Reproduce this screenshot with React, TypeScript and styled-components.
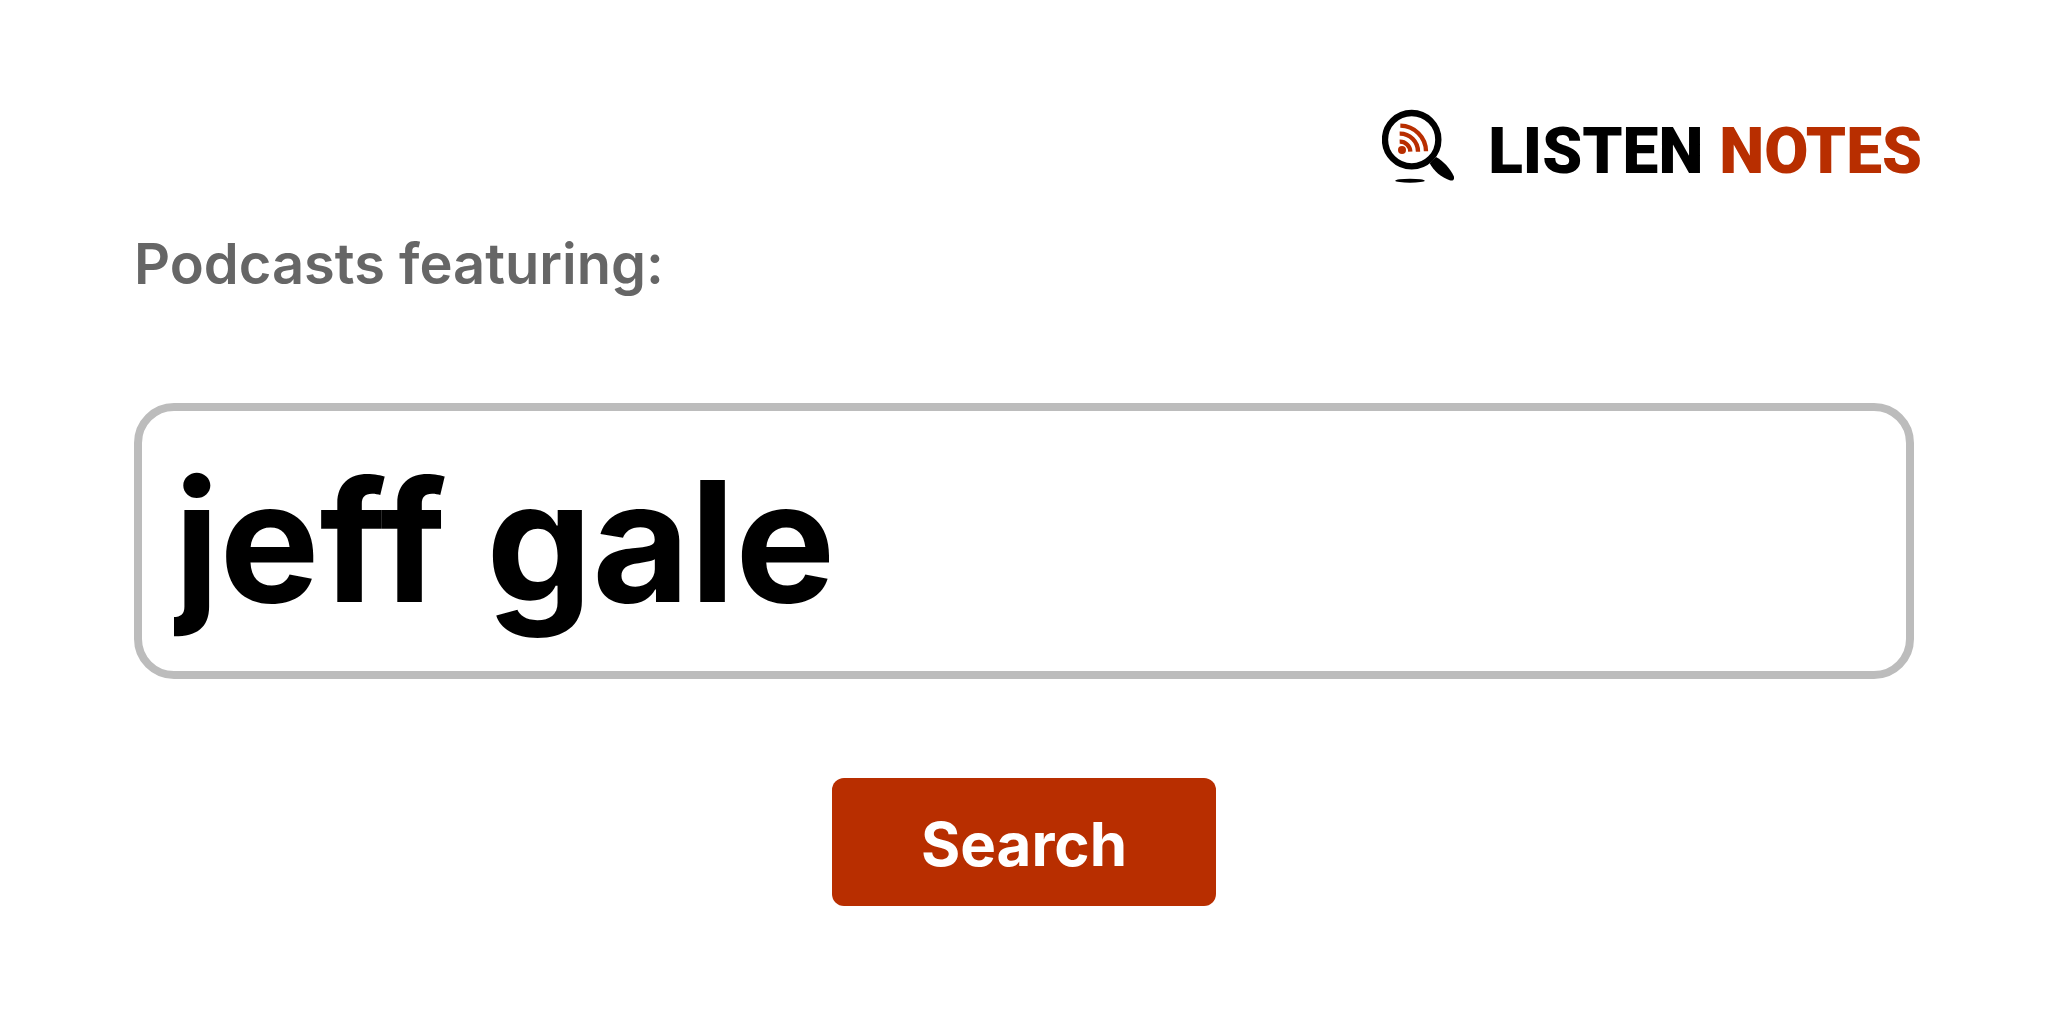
import React, { useState } from "react";
import styled, { createGlobalStyle } from "styled-components";

const brand = "#b82e00";

const GlobalStyle = createGlobalStyle`
  *, *::before, *::after { box-sizing: border-box; }
  body {
    margin: 0;
    background: #fff;
    color: #000;
    font-family: Inter, "Liberation Sans", sans-serif;
  }
`;

const Page = styled.main`
  padding: 106px 126px 112px 134px;
`;

const Header = styled.header`
  display: flex;
  justify-content: flex-end;
`;

const Brand = styled.a`
  display: flex;
  align-items: flex-start;
  gap: 34px;
  color: inherit;
  text-decoration: none;
`;

const BrandMark = styled.svg`
  width: 72px;
  height: 80px;
`;

const BrandName = styled.span`
  padding-top: 6px;
  font-family: Roboto, "Liberation Sans", sans-serif;
  font-size: 64px;
  font-weight: 900;
  line-height: 80px;
  white-space: nowrap;
`;

const BrandAccent = styled.span`
  color: ${brand};
`;

const SearchForm = styled.form`
  display: flex;
  flex-direction: column;
  align-items: center;
  margin-top: 38px;
  margin-right: 8px;
`;

const FieldLabel = styled.label`
  align-self: flex-start;
  color: #666;
  font-size: 56px;
  font-weight: 600;
  line-height: 68px;
`;

const QueryInput = styled.input`
  width: 100%;
  height: 276px;
  margin: 105px 0 99px;
  padding: 0 32px;
  border: 8px solid #bcbcbc;
  border-radius: 40px;
  outline: none;
  background: #fff;
  color: #000;
  font-family: inherit;
  font-size: 168px;
  font-weight: 700;
`;

const SearchButton = styled.button`
  width: 384px;
  height: 128px;
  padding: 4px 0 0;
  border: 0;
  border-radius: 12px;
  background: ${brand};
  color: #fff;
  font-family: inherit;
  font-size: 60px;
  font-weight: 700;
  cursor: pointer;
`;

function Logo() {
  return (
    <BrandMark viewBox="41 31 216 240" aria-hidden="true">
      <circle cx="130" cy="132" r="80" fill="none" stroke="#000" strokeWidth="19" />
      <path d="M184 203 L203 184 C224 195 246 219 256 241 C260 251 254 257 244 254 C220 246 196 226 184 203 Z" />
      <ellipse cx="125" cy="255" rx="44" ry="6" />
      <circle cx="101" cy="163" r="12" fill={brand} />
      <g fill="none" stroke={brand} strokeWidth="13">
        <path d="M94 138 A31 31 0 0 1 126 168" />
        <path d="M94 114 A54 54 0 0 1 149 168" />
        <path d="M96 90 A78 78 0 0 1 173 167" />
      </g>
    </BrandMark>
  );
}

export default function App() {
  const [query, setQuery] = useState("jeff gale");
  return (
    <>
      <GlobalStyle />
      <Page>
        <Header>
          <Brand href="#">
            <Logo />
            <BrandName>
              LISTEN <BrandAccent>NOTES</BrandAccent>
            </BrandName>
          </Brand>
        </Header>
        <SearchForm onSubmit={(event) => event.preventDefault()}>
          <FieldLabel htmlFor="query">Podcasts featuring:</FieldLabel>
          <QueryInput
            id="query"
            type="text"
            value={query}
            onChange={(event) => setQuery(event.target.value)}
          />
          <SearchButton type="submit">Search</SearchButton>
        </SearchForm>
      </Page>
    </>
  );
}
